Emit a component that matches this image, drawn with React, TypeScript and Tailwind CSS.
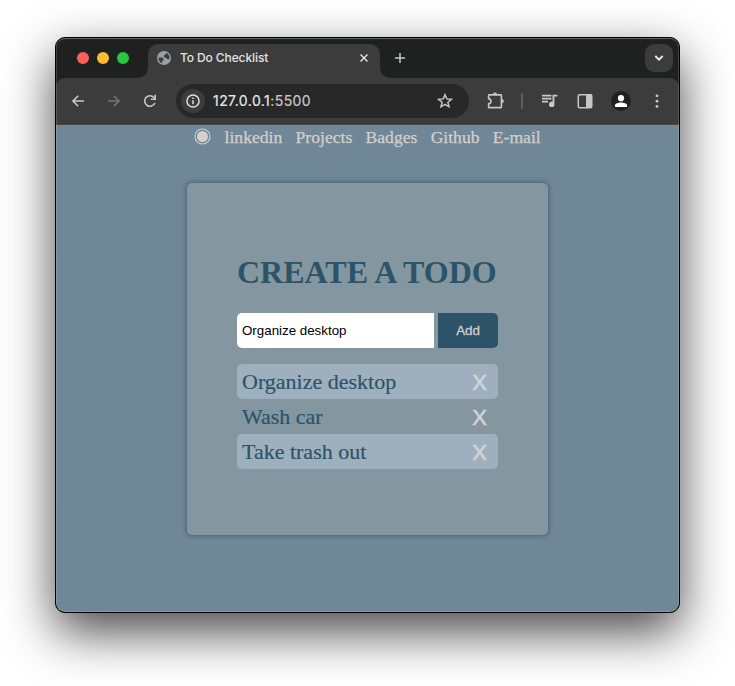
import React, { useState } from "react";

const chromeFont = "font-[Inter,Roboto,sans-serif]";

function Globe() {
  return (
    <svg width="14" height="14" viewBox="0 0 14 14">
      <circle cx="7" cy="7" r="7" fill="#9aa0a9" />
      <path
        d="M1.5 6.6H4.2C5.6 6.6 6.6 7.2 6.6 8.4V9.4H5.2V12.2A5.6 5.6 0 0 1 1.5 6.6Z M8.9 1.8V2.6C8.9 3.6 8.2 3.9 7 4V5.4C7 6.4 8 6.7 9 6.8C9.5 7.8 10.2 8.2 11.2 8.2H12.4A5.6 5.6 0 0 0 8.9 1.8Z"
        fill="#3c3c3c"
      />
    </svg>
  );
}

function TabStrip() {
  return (
    <div className="flex h-10 items-start bg-[#1f2120] pr-[6px]">
      <div className="mt-[14px] ml-[21px] flex w-[71px] gap-2">
        <span className="size-3 rounded-full bg-[#ff5f57]" />
        <span className="size-3 rounded-full bg-[#febc2e]" />
        <span className="size-3 rounded-full bg-[#28c840]" />
      </div>
      <div className="relative mt-[6px] flex h-[34px] w-[232px] items-start rounded-t-[10px] bg-[#3c3c3c] pt-[7px] pl-[9px]">
        <svg className="absolute bottom-0 -left-[10px]" width="10" height="10">
          <path d="M10 0V10H0A10 10 0 0 0 10 0Z" fill="#3c3c3c" />
        </svg>
        <svg className="absolute -right-[10px] bottom-0" width="10" height="10">
          <path d="M0 0V10H10A10 10 0 0 1 0 0Z" fill="#3c3c3c" />
        </svg>
        <Globe />
        <span className="ml-[9px] w-[180px] text-[12px] leading-[14px] font-medium tracking-[-0.1px] text-[#e3e3e3]">
          To Do Checklist
        </span>
        <svg className="mt-[3px]" width="8" height="8" viewBox="0 0 8 8">
          <path d="M.5 .5L7.5 7.5M7.5 .5L.5 7.5" stroke="#dedede" strokeWidth="1.5" />
        </svg>
      </div>
      <svg className="mt-[15px] ml-[15px]" width="10" height="10" viewBox="0 0 10 10">
        <path d="M5 0V10M0 5H10" stroke="#c7c7c7" strokeWidth="1.5" />
      </svg>
      <div className="mt-[6px] ml-auto flex size-7 items-center justify-center rounded-[9px] bg-[#3c3c3c]">
        <svg width="10" height="8" viewBox="0 0 10 8">
          <path d="M1.3 2L5 5.7L8.7 2" fill="none" stroke="#ececec" strokeWidth="1.8" />
        </svg>
      </div>
    </div>
  );
}

function Toolbar() {
  return (
    <div className="bg-[#1f2120]">
      <div className="flex h-[47px] items-center rounded-t-[9px] border-b border-[#4a4645] bg-[#3c3c3c] pl-[14px]">
        <svg width="16" height="16" viewBox="0 0 16 16">
          <path d="M14 8H3.2M8.2 2.8L3 8L8.2 13.2" fill="none" stroke="#c7c7c7" strokeWidth="1.6" />
        </svg>
        <svg className="ml-5" width="16" height="16" viewBox="0 0 16 16">
          <path d="M2 8H12.8M7.8 2.8L13 8L7.8 13.2" fill="none" stroke="#757575" strokeWidth="1.6" />
        </svg>
        <svg className="ml-5" width="16" height="16" viewBox="0 0 16 16">
          <path d="M12.9 10A5.3 5.3 0 1 1 12 4.5L13.2 5.8" fill="none" stroke="#c7c7c7" strokeWidth="1.6" />
          <path d="M14 1.8V7H8.8V5.5H12.4V1.8Z" fill="#c7c7c7" />
        </svg>
        <div className="ml-[18px] flex h-[34px] w-[293px] items-center rounded-full bg-[#282828] pr-4 pl-[5px]">
          <div className="flex size-6 items-center justify-center rounded-full bg-[#3c3c3c]">
            <svg width="14" height="14" viewBox="0 0 14 14">
              <circle cx="7" cy="7" r="6.1" fill="none" stroke="#dedede" strokeWidth="1.5" />
              <path d="M7 6.2V10.3M7 3.6V5.1" stroke="#dedede" strokeWidth="1.5" />
            </svg>
          </div>
          <span className="ml-2 text-[14px] leading-5 tracking-[0.44px] text-[#c7c7c7] [-webkit-text-stroke:0.2px]">
            <span className="text-[#e6e6e6]">127.0.0.1</span>:5500
          </span>
          <svg className="ml-auto" width="16" height="16" viewBox="0 0 16 16">
            <path
              d="M8 1.7L9.8 5.9L14.4 6.3L10.9 9.3L12 13.8L8 11.4L4 13.8L5.1 9.3L1.6 6.3L6.2 5.9Z"
              fill="none"
              stroke="#c7c7c7"
              strokeWidth="1.5"
            />
          </svg>
        </div>
        <svg className="ml-[17px]" width="20" height="20" viewBox="0 0 20 20">
          <path
            d="M2.6 4.5Q2.6 3.9 3.3 3.9H14.8Q15.4 3.9 15.4 4.5V15.9Q15.4 16.6 14.8 16.6H3.3Q2.6 16.6 2.6 15.9V12.8Q5 12.2 5 10.2T2.6 7.6Z"
            fill="none"
            stroke="#c7c7c7"
            strokeWidth="1.6"
          />
          <path d="M6.9 3.6A2.1 2.1 0 0 1 11.1 3.6ZM15.7 8.1A2.1 2.1 0 0 1 15.7 12.3Z" fill="#c7c7c7" />
        </svg>
        <span className="ml-[15px] h-4 w-[2px] rounded-full bg-[#5e5e5e]" />
        <svg className="ml-[18px]" width="18" height="16" viewBox="0 0 18 16">
          <path d="M1 2.6H10.5M1 5.6H10.5M1 8.6H7" stroke="#c7c7c7" strokeWidth="1.6" />
          <path d="M11.5 1.8H16.4V3.6H13.4V11.2A2.7 2.7 0 1 1 11.5 8.8Z" fill="#c7c7c7" />
        </svg>
        <svg className="ml-[18px]" width="16" height="16" viewBox="0 0 16 16">
          <rect x="1.25" y="1.75" width="13.5" height="13" rx="1.2" fill="none" stroke="#c7c7c7" strokeWidth="1.5" />
          <path d="M9 1.5H15V15H9Z" fill="#c7c7c7" />
        </svg>
        <svg className="ml-[18px]" width="20" height="20" viewBox="0 0 20 20">
          <circle cx="10" cy="10" r="10" fill="#1f2120" />
          <circle cx="10" cy="7.2" r="3.1" fill="#fff" />
          <path d="M4 16V14.2C4 12.3 7.5 11.4 10 11.4S16 12.3 16 14.2V16Z" fill="#fff" />
        </svg>
        <svg className="ml-6" width="4" height="16" viewBox="0 0 4 16" fill="#c7c7c7">
          <circle cx="2" cy="2.8" r="1.4" />
          <circle cx="2" cy="8.2" r="1.4" />
          <circle cx="2" cy="13.4" r="1.4" />
        </svg>
      </div>
    </div>
  );
}

const links = ["linkedin", "Projects", "Badges", "Github", "E-mail"];

function Nav() {
  return (
    <nav className="flex h-[25px] items-center justify-center gap-[13.3px] text-[17.6px] leading-[25px] text-[#d5d0cb] [-webkit-text-stroke:0.25px]">
      <svg className="-mt-[3px]" width="17" height="17" viewBox="0 0 17 17">
        <circle cx="8.5" cy="8.5" r="7.5" fill="none" stroke="#d5d0cb" strokeWidth="1.1" />
        <circle cx="8.5" cy="8.5" r="5.5" fill="#d5d0cb" />
      </svg>
      {links.map((l) => (
        <a key={l}>{l}</a>
      ))}
    </nav>
  );
}

const todos = ["Organize desktop", "Wash car", "Take trash out"];

function TodoCard() {
  const [text, setText] = useState("Organize desktop");
  return (
    <main className="mx-auto mt-[33px] h-[352px] w-[361px] rounded-[5px] bg-[#84969f] px-[50px] pt-[71px] text-[#2d5368] shadow-[0_0_5px_#2d5368]">
      <h1 className="text-[32px] leading-[37px] font-bold whitespace-nowrap">CREATE A TODO</h1>
      <div className="mt-[22px] flex h-[35px] gap-1 font-[Liberation_Sans,Arial,sans-serif] text-[13.33px]">
        <input
          className="w-[197px] rounded-l-[5px] bg-white pl-[5px] text-black outline-none"
          value={text}
          onChange={(e) => setText(e.target.value)}
        />
        <button className="w-[60px] rounded-r-[5px] bg-[#2d5368] text-[#d5d0cb] [-webkit-text-stroke:0.3px]">Add</button>
      </div>
      <ul className="mt-4">
        {todos.map((t) => (
          <li
            key={t}
            className="flex h-[35px] items-center justify-between rounded-[5px] pr-[11px] pl-[5px] text-[22px] leading-[35px] odd:bg-[#9eb0bd]"
          >
            <span className="[-webkit-text-stroke:0.2px]">{t}</span>
            <button className="pt-px font-[Liberation_Sans,Arial,sans-serif] text-[#d3d3d3] [-webkit-text-stroke:0.6px]">X</button>
          </li>
        ))}
      </ul>
    </main>
  );
}

export default function App() {
  return (
    <div className="h-[686px] w-[735px] overflow-hidden bg-white px-[55px] pt-[37px]">
      <div className="h-[576px] w-[625px] rounded-[10px] border border-black bg-black shadow-[0_19px_50px_rgba(0,0,0,0.72)]">
        <div className="relative h-[574px] overflow-hidden rounded-[9px] bg-[#6f8796]">
          <div className={chromeFont}>
            <TabStrip />
            <Toolbar />
          </div>
          <div className="font-[Liberation_Serif,Times_New_Roman,serif]">
            <Nav />
            <TodoCard />
          </div>
          <div className="pointer-events-none absolute inset-0 rounded-[9px] border border-white/15 border-t-white/30" />
        </div>
      </div>
    </div>
  );
}
